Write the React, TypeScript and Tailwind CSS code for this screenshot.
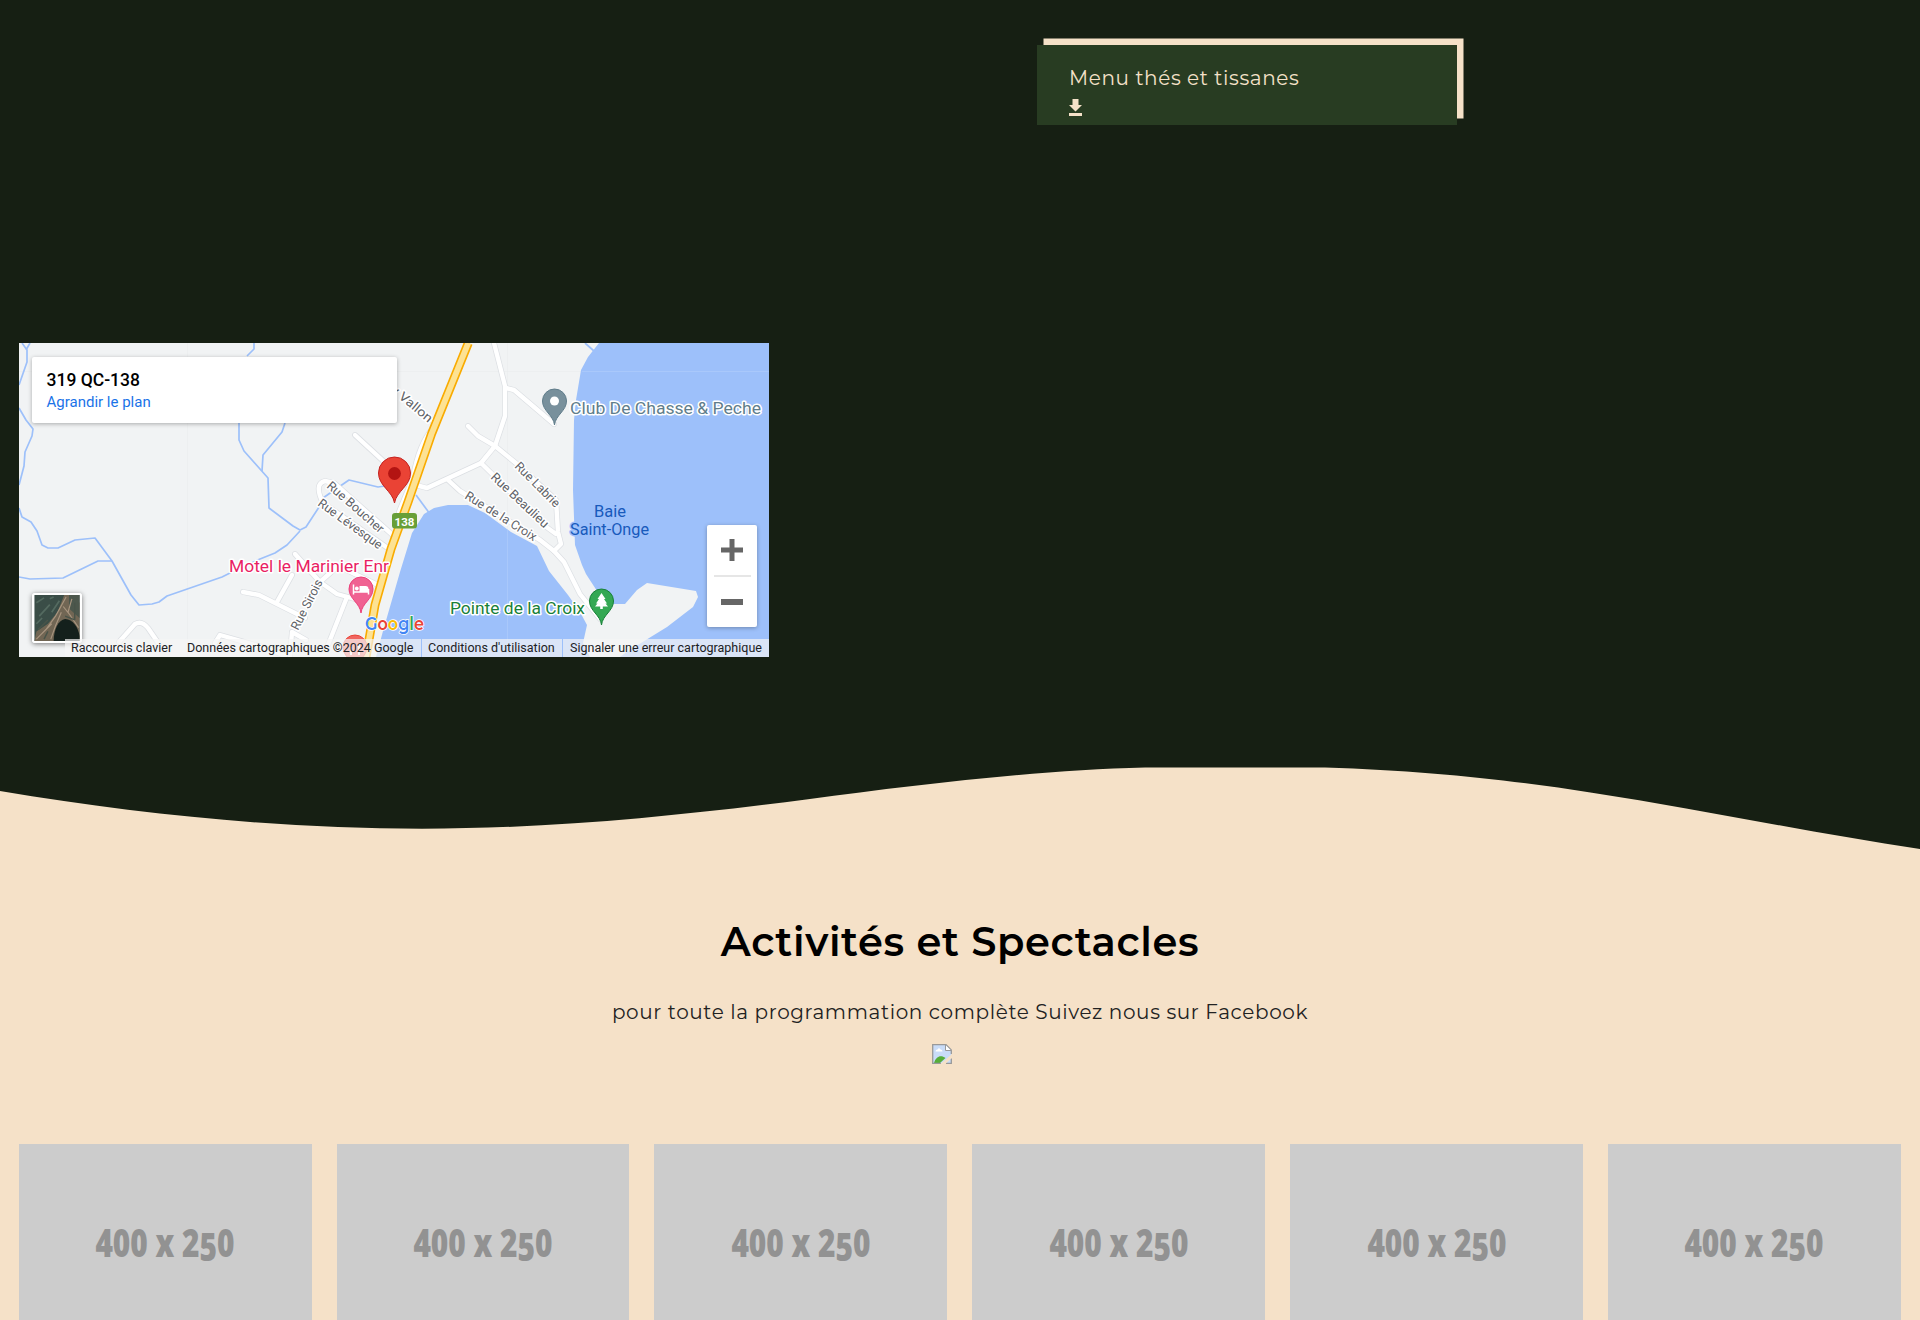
import React from "react";

type LabelProps = { x: number; y: number; w: number; size?: number; fill?: string; rot?: number; halo?: string; children: string };

function Label({ x, y, w, size = 17, fill = "#5f6368", rot = 0, halo = "#ffffff", children }: LabelProps) {
  return (
    <text x={x} y={y} textLength={w} lengthAdjust="spacingAndGlyphs" fontSize={size} fill={fill} stroke={halo} strokeWidth={3} strokeLinejoin="round" paintOrder="stroke" transform={`rotate(${rot} ${x} ${y})`}>
      {children}
    </text>
  );
}

const roads = [
  "M355 435L393 470",
  "M494 343L505 386L505 416L495 446L481 463L427 488L412 484",
  "M506 388L514 390L554 424",
  "M468 426L478 436L495 446L517 464L556 500L558 532L561 544L554 551L564 562L580 594L600 619",
  "M481 463L545 526L556 534",
  "M448 480L460 491L540 540L554 551",
  "M424 414L436 424",
  "M434 427C422 440 416 460 413 478L410 485L399 512",
  "M323 503C317 491 317 483 325 481L334 483L396 538",
  "M323 503L392 551",
  "M243 592L259 595L305 618",
  "M277 602L292 575",
  "M295 554L320 582L337 594L362 601",
  "M320 582L338 566L378 585",
  "M347 597L328 645",
  "M119 642L135 624C140 621 144 623 148 628L159 644",
  "M215 643L220 635L266 648L285 656",
  "M290 656L292 632L306 640",
];

const streams = [
  "M22 343L27 350L27 362L19 385M30 343L26 350",
  "M19 408L26 420L33 429L32 436L25 452L24 466L19 485",
  "M254 343L254 349L247 356",
  "M239 423L239 440L244 451L268 478L269 508L293 526L300 530L306 527L323 501",
  "M285 423L282 432L263 455L262 471",
  "M323 498L333 491L349 480L378 487L406 483",
  "M19 508L22 517L31 522L37 531L42 545L48 548L58 548L75 540L95 538L112 561L131 595L139 605L152 604L159 602L167 596L222 577L232 572L260 559L275 553L287 545L300 531",
  "M19 577L30 579L63 578L98 561L112 561",
  "M416 495L430 514",
  "M585 343L594 351",
];

const highway = "M468.300 343L431.500 434L408 502L391 549L375 605L366 657";

function Pin({ x, y, fill, edge, children }: { x: number; y: number; fill: string; edge: string; children?: React.ReactNode }) {
  return (
    <g transform={`translate(${x} ${y})`}>
      <path d="M0 24C-1 14-12 10-12 0A12 12 0 1 1 12 0C12 10 1 14 0 24Z" fill={fill} stroke={edge} strokeWidth={1} />
      {children}
    </g>
  );
}

function MapDrawing() {
  return (
    <svg viewBox="19 343 750 314" className="block h-[314px] w-[750px]" preserveAspectRatio="none" style={{ fontFamily: "Roboto, sans-serif" }}>
      <rect x="19" y="343" width="750" height="314" fill="#f1f3f4" />
      <path d="M187.500 343V657M507.500 343V657M19 371.500H769" stroke="#e8eaed" strokeWidth=".5" />
      <path d="M599 343L588 357L581 370L576 400L574 420L573 490L575 545L582 565L586 574L597 591L610 604L625 604L637 590L647 583L696 591L698 597L693 607L667 627L628 651L620 657H769V343Z" fill="#9dc0fa" />
      <path d="M376 657L383 631L400 572L412 533L424 514L434 508L448 505L468 505L485 513L511 532L537 546L549 571L568 595L580 612L587 625L583 643L590 657Z" fill="#9dc0fa" />
      <path d="M507.500 530V657M582 371.500H769" stroke="#a9c8fb" strokeWidth="1" />
      {streams.map((d) => <path key={d} d={d} fill="none" stroke="#9dc0fa" strokeWidth="1.7" strokeLinejoin="round" />)}
      {roads.map((d) => <path key={d} d={d} fill="none" stroke="#dcdfe3" strokeWidth="5.800" strokeLinejoin="round" strokeLinecap="round" />)}
      {roads.map((d) => <path key={d} d={d} fill="none" stroke="#ffffff" strokeWidth="4.400" strokeLinejoin="round" strokeLinecap="round" />)}
      <path d={highway} fill="none" stroke="#f9ab00" strokeWidth="9" strokeLinejoin="round" />
      <path d={highway} fill="none" stroke="#fde293" strokeWidth="5.800" strokeLinejoin="round" />

      <Label x={390} y={391} w={50} size={12.5} rot={40}>y Vallon</Label>
      <Label x={514} y={467} w={58} size={12.5} rot={45}>Rue Labrie</Label>
      <Label x={490} y={478} w={74} size={12.5} rot={43}>Rue Beaulieu</Label>
      <Label x={464} y={498} w={82} size={12.5} rot={32}>Rue de la Croix</Label>
      <Label x={326} y={487} w={71} size={12.5} rot={41}>Rue Boucher</Label>
      <Label x={317} y={505} w={76} size={12.5} rot={36}>Rue Lévesque</Label>
      <Label x={298} y={631} w={55} size={12.5} rot={-63}>Rue Sirois</Label>

      <Label x={570} y={413.5} w={191} size={16.8} fill="#607d8b">Club De Chasse &amp; Peche</Label>
      <Label x={229} y={571.5} w={160} size={16.8} fill="#e91e63">Motel le Marinier Enr</Label>
      <Label x={450} y={613.5} w={135} size={16.8} fill="#188038">Pointe de la Croix</Label>
      <Label x={594} y={517} w={32} size={15.8} fill="#185abc" halo="#9dc0fa">Baie</Label>
      <Label x={570} y={535} w={79} size={15.8} fill="#185abc" halo="#9dc0fa">Saint-Onge</Label>

      <rect x="392" y="513" width="25" height="15.500" rx="3" fill="#689f38" />
      <text x="404.500" y="525.500" textAnchor="middle" fontSize="11.500" fontWeight="700" fill="#fff">138</text>

      <g transform="translate(394.500 474)">
        <path d="M0 29C-2 17-16 12-16-1A16 16 0 1 1 16-1C16 12 2 17 0 29Z" fill="#ea4335" stroke="#c5221f" strokeWidth="1" />
        <circle cy="-.5" r="6.400" fill="#b31412" />
      </g>
      <Pin x={554.5} y={401} fill="#78909c" edge="#607d8b"><circle r="4.500" fill="#fff" /></Pin>
      <Pin x={361} y={589} fill="#f06292" edge="#ec407a">
        <path d="M-7.500-4.500V5.500M-7.500 3H7.500M7.500 5.500V0" fill="none" stroke="#fff" strokeWidth="1.500" />
        <path d="M-1.500 3V-3H4.500Q7.500-3 7.500 0V3Z" fill="#fff" /><circle cx="-4.200" cy="-.5" r="1.900" fill="#fff" />
      </Pin>
      <Pin x={601.5} y={601} fill="#34a853" edge="#188038">
        <path d="M0-8L4-2H2.500L5.500 2.500H4L6.500 5.500H1.300V8H-1.300V5.500H-6.500L-4 2.500H-5.500L-2.500-2H-4Z" fill="#fff" />
      </Pin>
      <Pin x={355} y={647} fill="#f06560" edge="#ea4335"><path d="M-4 8V0M4 8V-3" stroke="#fff" strokeWidth="2" /></Pin>

      <text x="365" y="630" fontFamily="Montserrat, sans-serif" fontSize="18.500" fontWeight="600" textLength="59" lengthAdjust="spacingAndGlyphs" stroke="#fff" strokeWidth="1.500" paintOrder="stroke">
        <tspan fill="#4285f4">G</tspan><tspan fill="#ea4335">o</tspan><tspan fill="#fbbc04">o</tspan><tspan fill="#4285f4">g</tspan><tspan fill="#34a853">l</tspan><tspan fill="#ea4335">e</tspan>
      </text>
    </svg>
  );
}

function Satellite() {
  return (
    <svg viewBox="0 0 47 48" className="block h-full w-full">
      <rect width="47" height="48" fill="#3a4d47" />
      <path d="M0 48L2 38L14 30L24 18L31 0H40L47 8V48Z" fill="#716654" />
      <path d="M36 0L47 0V24L36 14Z" fill="#4c574c" />
      <path d="M2 46L12 36L22 22L33 2M39 4L35 18L46 34M28 18L22 32L17 46M8 40L18 30M30 12L38 22" stroke="#a8957f" strokeWidth="1.200" fill="none" />
      <path d="M4 36L14 26M10 46L14 38M32 22L42 26M42 8V26" stroke="#495449" strokeWidth="1.500" fill="none" />
      <path d="M2 8L10 3M5 22L16 10M18 18L26 6M2 30L8 24M16 4L20 2" stroke="#546a60" strokeWidth="1.800" fill="none" />
      <path d="M20 48C20 36 25 26 32 25C40 25 46 34 47 43V48Z" fill="#14201c" />
    </svg>
  );
}

function BrokenImage() {
  return (
    <svg viewBox="0 0 20 20" className="h-5 w-5">
      <path d="M.7.700H14L19.300 6V11L10 19.300H.7Z" fill="#c9dcf8" />
      <path d="M3.500 7.500Q3.500 5.500 5.500 5.500Q7 3 8.500 5.500Q10.500 5.500 10.500 7.500Z" fill="#fff" />
      <path d="M2 19C4 12 9 10.500 13.500 14L8 19Z" fill="#56ae39" />
      <path d="M9 19.300H.7V.7H14L19.300 6V10" fill="none" stroke="#999" strokeWidth="1.300" />
      <path d="M13.500 1V6.500H19" fill="#fff" stroke="#999" />
      <path d="M14 19.300H19.300V14.500" fill="#c9dcf8" stroke="#999" strokeWidth="1.300" />
      <path d="M8.500 20L20 10V13.500L13 20Z" fill="#f5e1c8" />
    </svg>
  );
}

export default function App() {
  return (
    <div className="flex h-[1320px] w-full flex-col overflow-hidden bg-[#161f13] font-[Montserrat,Inter,sans-serif]">
      <div className="h-[343px] shrink-0 pl-[1037px] pt-[45px]">
        <a className="block h-[80px] w-[420px] bg-[#283c22] pl-8 pt-[18px] text-[#f5e1c8] shadow-[6.500px_-6.500px_0_0_#f5e1c8]">
          <span className="block h-[30px] w-max text-[20px] leading-[30px] tracking-[0.6px]">Menu thés et tissanes</span>
          <svg viewBox="0 0 13 17" className="mt-[6px] h-[17px] w-[13px]" fill="currentColor"><path d="M3.500 0H9.500V6H13L6.500 12.500L0 6H3.500ZM0 14H13V17H0Z" /></svg>
        </a>
      </div>

      <section className="relative ml-[19px] h-[314px] w-[750px] shrink-0 overflow-hidden font-[Roboto,sans-serif]">
        <MapDrawing />
        <div className="absolute left-[13px] top-[14px] h-[66px] w-[365px] rounded-[2px] bg-white pl-[14.500px] pt-[11.500px] shadow-[0_1px_4px_rgba(0,0,0,0.3)]">
          <div className="text-[17.500px] font-medium leading-[22px] text-black">319 QC-138</div>
          <div className="text-[15px] leading-[22px] text-[#1a73e8]">Agrandir le plan</div>
        </div>
        <div className="absolute left-[13px] top-[250px] h-[50px] w-[50px] rounded-[3px] border-2 border-white shadow-[0_1px_5px_rgba(0,0,0,0.5)]"><Satellite /></div>
        <div className="absolute left-[688px] top-[182px] flex h-[102px] w-[50px] flex-col items-center rounded-[2px] bg-white text-[#666] shadow-[0_1px_4px_rgba(0,0,0,0.3)]">
          <div className="flex h-[50px] items-center"><svg viewBox="0 0 22 22" className="h-[22px] w-[22px]" fill="currentColor"><path d="M8.500 0H13.500V8.500H22V13.500H13.500V22H8.500V13.500H0V8.500H8.500Z" /></svg></div>
          <div className="h-[1.500px] w-[37px] bg-[#e6e6e6]" />
          <div className="flex h-[50px] items-center"><div className="h-[6px] w-[22px] bg-[#666]" /></div>
        </div>
        <div className="absolute bottom-0 left-[46px] right-0 flex h-[18px] text-[12.500px] leading-[18px] text-[#202124]">
          <div className="w-[356px] whitespace-nowrap bg-[#f5f5f5]/70 pl-[6px]"><span className="inline-block w-[116px]">Raccourcis clavier</span><span>Données cartographiques ©2024 Google</span></div>
          <div className="ml-px w-[140px] bg-[#f5f5f5]/70 pl-[6px]">Conditions d'utilisation</div>
          <div className="ml-px grow whitespace-nowrap bg-[#f5f5f5]/70 pl-[7px]">Signaler une erreur cartographique</div>
        </div>
      </section>

      <div className="h-[110px] shrink-0" />
      <svg viewBox="0 0 1920 82" className="block h-[82px] w-full shrink-0" preserveAspectRatio="none">
        <path d="M0 24C140 47.500 281 61.700 422 61.700C560 61.700 690 47.500 808 32.300C920 17 1040 3 1145 .5H1325C1430 4 1510 13 1592 25.700C1702 42.700 1812 66 1920 82H0Z" fill="#f5e1c8" />
      </svg>
      <main className="flex grow flex-col items-center bg-[#f5e1c8] pt-[63px] text-black">
        <h2 className="text-[40px] font-semibold leading-[60px] tracking-[0.640px]">Activités et Spectacles</h2>
        <p className="mt-[25px] text-[20px] leading-[30px] tracking-[0.620px] text-[#222]">pour toute la programmation complète Suivez nous sur Facebook</p>
        <div className="mr-[36px] mt-[17px]"><BrokenImage /></div>
        <div className="mt-[79.500px] grid w-full grid-cols-6 gap-[25px] pl-[18.750px] pr-[19.250px]">
          {Array.from({ length: 6 }, (_, i) => (
            <div key={i} className="flex h-[183px] items-center justify-center bg-[#ccc] pt-[15px] font-['Open_Sans',sans-serif] text-[39px] font-extrabold text-[#929292]">
              <span className="inline-block scale-x-[0.765] whitespace-nowrap">400 x 2<span className="relative top-[4px]">5</span>0</span>
            </div>
          ))}
        </div>
      </main>
    </div>
  );
}
